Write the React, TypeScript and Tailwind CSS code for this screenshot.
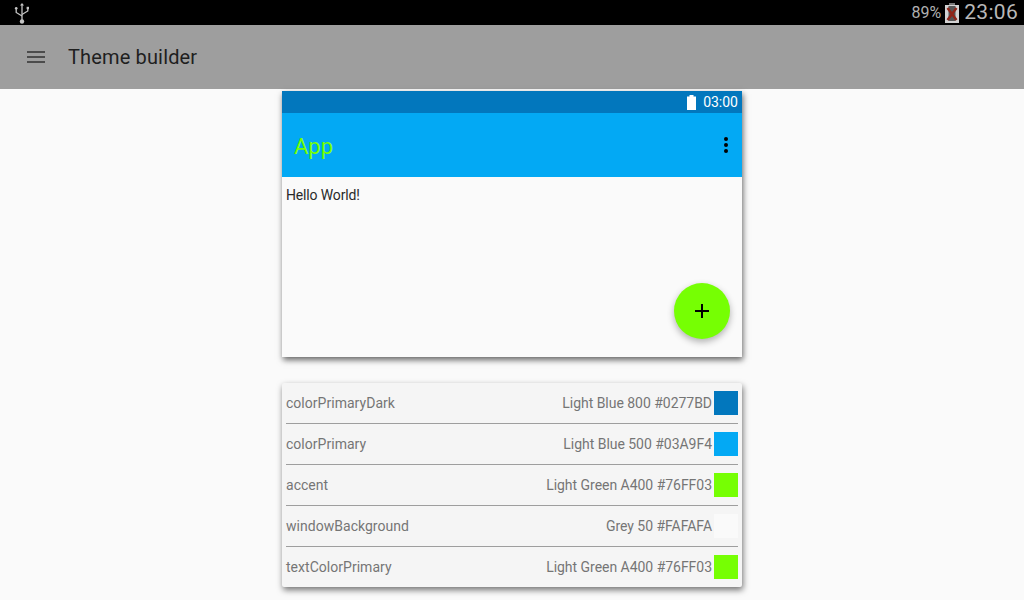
const rows = [
  { name: 'colorPrimaryDark', label: 'Light Blue 800 #0277BD', swatch: 'bg-[#0277BD]' },
  { name: 'colorPrimary', label: 'Light Blue 500 #03A9F4', swatch: 'bg-[#03A9F4]' },
  { name: 'accent', label: 'Light Green A400 #76FF03', swatch: 'bg-[#76FF03]' },
  { name: 'windowBackground', label: 'Grey 50 #FAFAFA', swatch: 'bg-[#FAFAFA]' },
  { name: 'textColorPrimary', label: 'Light Green A400 #76FF03', swatch: 'bg-[#76FF03]' },
]

function UsbIcon() {
  return (
    <svg width="16" height="22" viewBox="0 0 16 22" fill="none" stroke="#c4c4c4" strokeWidth="1.3">
      <path d="M8 2v17" />
      <path d="M6 3.6 8 1l2 2.600z" fill="#c4c4c4" stroke="none" />
      <path d="M2.200 7v3.500L8 14" />
      <path d="M13.800 6.500v2.500L8 12.500" />
      <circle cx="2.200" cy="6.200" r="1.300" fill="#c4c4c4" stroke="none" />
      <rect x="12.600" y="4.800" width="2.400" height="2.400" fill="#c4c4c4" stroke="none" />
      <circle cx="8" cy="19.500" r="2.200" fill="#c4c4c4" stroke="none" />
    </svg>
  )
}

function NoBatteryIcon() {
  return (
    <svg width="14" height="20" viewBox="0 0 14 20">
      <rect x="4" y="0" width="6" height="2" fill="#777" />
      <rect x="0" y="2" width="14" height="18" fill="#d2d2d2" />
      <rect x="3.500" y="3" width="7" height="15" fill="#555" />
      <path d="M2.500 5 11.500 17M11.500 5 2.500 17" stroke="#8f2417" strokeWidth="2.400" />
    </svg>
  )
}

export default function App() {
  return (
    <div className="h-[600px] w-[1024px] overflow-hidden bg-[#fafafa] font-['Roboto',sans-serif]">
      {/* System status bar */}
      <div className="flex h-[25px] items-center justify-between bg-black pl-[14px] pr-[6px]">
        <UsbIcon />
        <div className="flex items-center">
          <span className="text-[16px] text-[#b0b0b0]">89%</span>
          <span className="ml-[4px] mr-[5px] flex"><NoBatteryIcon /></span>
          <span className="text-[21px] leading-none tracking-[0.3px] text-[#b8b8b8]">23:06</span>
        </div>
      </div>

      {/* Toolbar */}
      <div className="flex h-[64px] items-center bg-[#9e9e9e]">
        <div className="ml-[27px] flex w-[18px] flex-col gap-[3px]">
          <div className="h-[2px] bg-[#4c4c4c]" />
          <div className="h-[2px] bg-[#4c4c4c]" />
          <div className="h-[2px] bg-[#4c4c4c]" />
        </div>
        <span className="ml-[23px] text-[20px] tracking-[0.15px] text-[#1f1f1f]">Theme builder</span>
      </div>

      <div className="flex flex-col items-center pt-[2px]">
        {/* Preview */}
        <div className="relative h-[266px] w-[460px] bg-[#fafafa] shadow-[1px_3px_6px_rgba(0,0,0,0.6)]">
          <div className="flex h-[22px] items-center justify-end bg-[#0277BD] pr-[4px]">
            <svg width="9" height="15" viewBox="0 0 9 15" className="mr-[7px]">
              <path d="M2.500 0h4v1.500H9V15H0V1.500h2.500z" fill="#fff" />
            </svg>
            <span className="text-[14px] text-white">03:00</span>
          </div>
          <div className="flex h-[64px] items-center justify-between bg-[#03A9F4] pl-[12px] pr-[14px] pt-[2px]">
            <span className="text-[22px] text-[#76FF03]">App</span>
            <div className="mb-[2px] flex flex-col gap-[2px]">
              <div className="h-[4px] w-[4px] rounded-full bg-black" />
              <div className="h-[4px] w-[4px] rounded-full bg-black" />
              <div className="h-[4px] w-[4px] rounded-full bg-black" />
            </div>
          </div>
          <p className="pl-[4px] pt-[8px] text-[14px] leading-[20px] tracking-[-0.15px] text-[#2a2a2a]">Hello World!</p>
          <div className="absolute bottom-[18px] right-[12px] flex h-[56px] w-[56px] items-center justify-center rounded-full bg-[#76FF03] shadow-[0_3px_7px_rgba(0,0,0,0.3)]">
            <svg width="14" height="14" viewBox="0 0 14 14">
              <path d="M7 0v14M0 7h14" stroke="#000" strokeWidth="2" />
            </svg>
          </div>
        </div>

        {/* Colour list */}
        <div className="mt-[26px] w-[460px] rounded-[2px] bg-[#f5f5f5] px-[4px] shadow-[1px_3px_6px_rgba(0,0,0,0.55)]">
          {rows.map((row, index) => (
            <div
              key={row.name}
              className={`flex items-center justify-between text-[14px] text-[#757575] ${
                index < rows.length - 1 ? 'h-[41px] border-b border-[#9e9e9e]' : 'h-[40px]'
              }`}
            >
              <span className="tracking-[0.03px]">{row.name}</span>
              <div className="flex items-center">
                <span className="tracking-[-0.03px]">{row.label}</span>
                <div className={`ml-[2px] h-[24px] w-[24px] ${row.swatch}`} />
              </div>
            </div>
          ))}
        </div>
      </div>
    </div>
  )
}
